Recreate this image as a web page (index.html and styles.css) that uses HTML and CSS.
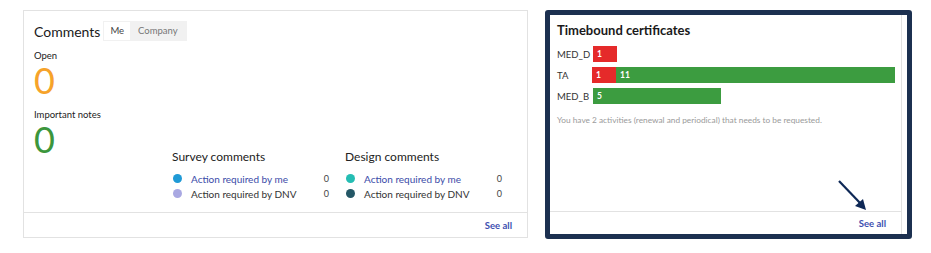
FILE: index.html
```html
<!DOCTYPE html>
<html lang="en">
<head>
    <meta charset="utf-8">
    <title>Dashboard</title>
    <link rel="stylesheet" href="styles.css">
</head>
<body>
    <div class="dashboard">
        <!-- Comments -->
        <section class="card comments-card">
            <div class="card-body">
                <div class="card-header">
                    <h2 class="card-title">Comments</h2>
                    <div class="tabs">
                        <span class="tab active">Me</span>
                        <span class="tab">Company</span>
                    </div>
                </div>
                <div class="comments-body">
                    <div class="stats">
                        <div class="stat-label">Open</div>
                        <div class="stat-value open">0</div>
                        <div class="stat-label">Important notes</div>
                        <div class="stat-value notes">0</div>
                    </div>
                    <div class="groups">
                        <div class="group">
                            <h3 class="group-title">Survey comments</h3>
                            <div class="group-row">
                                <span class="dot" style="background:#1f9ad6"></span>
                                <a class="group-link">Action required by me</a>
                                <span class="group-count">0</span>
                            </div>
                            <div class="group-row">
                                <span class="dot" style="background:#a9a8e2"></span>
                                <span class="group-text">Action required by DNV</span>
                                <span class="group-count">0</span>
                            </div>
                        </div>
                        <div class="group">
                            <h3 class="group-title">Design comments</h3>
                            <div class="group-row">
                                <span class="dot" style="background:#25bdb3"></span>
                                <a class="group-link">Action required by me</a>
                                <span class="group-count">0</span>
                            </div>
                            <div class="group-row">
                                <span class="dot" style="background:#245766"></span>
                                <span class="group-text">Action required by DNV</span>
                                <span class="group-count">0</span>
                            </div>
                        </div>
                    </div>
                </div>
            </div>
            <div class="card-footer">
                <a class="see-all">See all</a>
            </div>
        </section>

        <!-- Timebound certificates (highlighted) -->
        <div class="highlight">
            <section class="card cert-card">
                <div class="card-body">
                    <h2 class="cert-title">Timebound certificates</h2>
                    <div class="chart">
                        <div class="chart-row">
                            <span class="chart-label">MED_D</span>
                            <div class="bars">
                                <span class="bar red" style="width:24px">1</span>
                            </div>
                        </div>
                        <div class="chart-row">
                            <span class="chart-label">TA</span>
                            <div class="bars">
                                <span class="bar red" style="width:24px">1</span>
                                <span class="bar green" style="width:279px">11</span>
                            </div>
                        </div>
                        <div class="chart-row">
                            <span class="chart-label">MED_B</span>
                            <div class="bars">
                                <span class="bar green" style="width:128px">5</span>
                            </div>
                        </div>
                    </div>
                    <p class="cert-note">You have 2 activities (renewal and periodical) that needs to be requested.</p>
                </div>
                <div class="card-footer">
                    <a class="see-all">See all</a>
                </div>
                <svg class="pointer" width="32" height="34" viewBox="0 0 32 34">
                    <line x1="2" y1="2" x2="24" y2="25" stroke="#0e2856" stroke-width="2.2"/>
                    <polygon points="29,31 18,27 26,20" fill="#0e2856"/>
                </svg>
            </section>
        </div>
    </div>
</body>
</html>
```

FILE: styles.css
```css
* {
    box-sizing: border-box;
}

body {
    margin: 0;
    background: #fff;
    font-family: Lato, "Noto Sans", sans-serif;
    color: #222;
}

.dashboard {
    display: flex;
    align-items: flex-start;
    gap: 17px;
    padding: 10px 0 0 23px;
}

.card {
    display: flex;
    flex-direction: column;
    background: #fff;
    border: 1px solid #e2e2e2;
}

.card-body {
    flex: 1;
}

.card-footer {
    display: flex;
    justify-content: flex-end;
    align-items: center;
    border-top: 1px solid #e2e2e2;
}

.see-all {
    font-size: 9.5px;
    font-weight: bold;
    color: #3d4fb0;
}

/* Comments */
.comments-card {
    width: 505px;
    height: 228px;
}

.comments-card .card-body {
    display: flex;
    flex-direction: column;
    padding: 10px 10px 0 10px;
}

.comments-card .card-footer {
    height: 25px;
    padding-right: 15px;
}

.card-header {
    display: flex;
    align-items: center;
    gap: 3px;
}

.card-title {
    margin: 0;
    font-size: 14px;
    font-weight: normal;
    color: #1a1a1a;
}

.tabs {
    display: flex;
    background: #f1f1f1;
    padding: 1px;
}

.tab {
    font-size: 9.5px;
    line-height: 18px;
    color: #777;
    padding: 0 8px;
}

.tab.active {
    background: #fff;
    color: #444;
    padding: 0 6px;
}

.comments-body {
    flex: 1;
    display: flex;
}

.stats {
    width: 138px;
    padding-top: 9px;
}

.stat-label {
    font-size: 9.5px;
    line-height: 12px;
    color: #222;
}

.stat-value {
    font-size: 36px;
    line-height: 36px;
    margin: 0 0 11px;
}

.stat-value.open {
    color: #f6a32a;
}

.stat-value.notes {
    color: #3c963c;
    margin-bottom: 0;
}

.groups {
    display: flex;
    gap: 16px;
    align-self: flex-end;
    margin-bottom: 11px;
}

.group {
    width: 157px;
}

.group-title {
    margin: 0 0 7px;
    font-size: 12px;
    font-weight: normal;
    color: #222;
}

.group-row {
    display: flex;
    align-items: center;
    height: 15px;
    font-size: 10px;
}

.dot {
    width: 9px;
    height: 9px;
    border-radius: 50%;
    margin: 0 9px 0 1px;
}

.group-link {
    color: #3a4ba8;
    flex: 1;
}

.group-text {
    color: #333;
    flex: 1;
}

.group-count {
    font-size: 9px;
    color: #444;
}

/* Timebound certificates */
.highlight {
    border: 5px solid #1c3050;
    border-radius: 3px;
    width: 367px;
    height: 229px;
    padding-right: 5px;
}

.cert-card {
    position: relative;
    height: 100%;
    border-width: 0 1px 0 0;
}

.cert-card .card-body {
    padding: 7px 6px 0 7px;
}

.cert-card .card-footer {
    height: 23px;
    padding-right: 15px;
}

.cert-title {
    margin: 0 0 8px;
    font-size: 13px;
    font-weight: bold;
    color: #1a1a1a;
}

.chart-row {
    display: flex;
    align-items: center;
    margin-bottom: 5px;
}

.chart-label {
    width: 36px;
    font-size: 9.5px;
    color: #333;
}

.bars {
    display: flex;
}

.bar {
    height: 16px;
    line-height: 16px;
    padding-left: 4px;
    font-size: 8.5px;
    font-weight: bold;
    color: #fff;
}

.bar.red {
    background: #e52a2a;
}

.bar.green {
    background: #3c9c40;
}

.cert-note {
    margin: 11px 0 0;
    font-size: 8.3px;
    color: #9a9a9a;
}

.pointer {
    position: absolute;
    left: 287px;
    top: 164px;
}
```
